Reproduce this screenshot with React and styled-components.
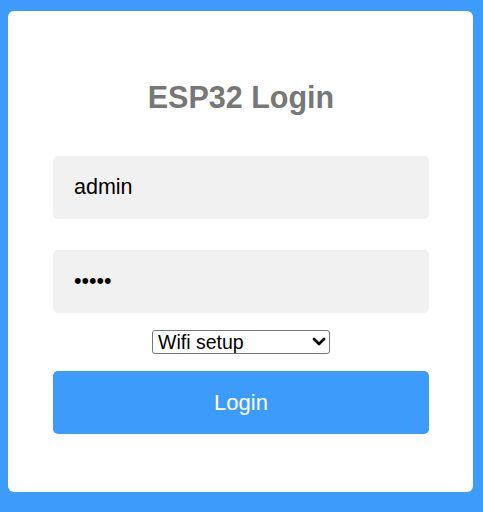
import React from "react";
import styled, { createGlobalStyle } from "styled-components";

const azul = "#3d9bfc";

const Global = createGlobalStyle`
  html, body {
    margin: 0;
    padding: 0;
    background: ${azul};
    font-family: "Liberation Sans", Arial, sans-serif;
  }
`;

const Page = styled.div`
  height: 512px;
  box-sizing: border-box;
  padding: 11px 10px 20px 8px;
  display: flex;
`;

const Card = styled.form`
  flex: 1;
  background: #fff;
  border-radius: 6px;
  padding: 68px 44px 0 45px;
  display: flex;
  flex-direction: column;
  align-items: stretch;
`;

const Titulo = styled.h1`
  margin: 0 0 41px 0;
  text-align: center;
  color: #777;
  font-size: 30.5px;
  line-height: 36px;
  font-weight: bold;
`;

const Campo = styled.input`
  height: 63px;
  box-sizing: border-box;
  border: 0;
  border-radius: 5px;
  background: #f1f1f1;
  padding: 0 21px;
  font-family: inherit;
  font-size: 21.5px;
  color: #000;
  margin-bottom: ${({ $gap }) => $gap}px;
  outline: none;
`;

const SelectWrap = styled.div`
  position: relative;
  align-self: center;
  width: 178px;
  height: 24px;
  margin-bottom: 17px;
`;

const Select = styled.select`
  appearance: none;
  width: 100%;
  height: 100%;
  box-sizing: border-box;
  border: 1px solid #777;
  border-radius: 3px;
  background: #fff;
  font-family: inherit;
  font-size: 19.5px;
  color: #000;
  padding: 0 0 0 5px;
  outline: none;
`;

const Chevron = styled.svg`
  position: absolute;
  right: 4px;
  top: 6px;
  width: 14px;
  height: 11px;
  pointer-events: none;
`;

const Botao = styled.button`
  height: 63px;
  border: 0;
  border-radius: 5px;
  background: ${azul};
  color: #fff;
  font-family: inherit;
  font-size: 22px;
`;

export default function App() {
  return (
    <>
      <Global />
      <Page>
        <Card onSubmit={(e) => e.preventDefault()}>
          <Titulo>ESP32 Login</Titulo>
          <Campo defaultValue="admin" $gap={31} />
          <Campo type="password" defaultValue="admin" $gap={17} />
          <SelectWrap>
            <Select defaultValue="wifi">
              <option value="wifi">Wifi setup</option>
              <option value="update">Update</option>
            </Select>
            <Chevron viewBox="0 0 14 11">
              <path d="M2 3 L7 8 L12 3" fill="none" stroke="#000" strokeWidth="2.8" strokeLinecap="round" strokeLinejoin="round" />
            </Chevron>
          </SelectWrap>
          <Botao type="submit">Login</Botao>
        </Card>
      </Page>
    </>
  );
}
